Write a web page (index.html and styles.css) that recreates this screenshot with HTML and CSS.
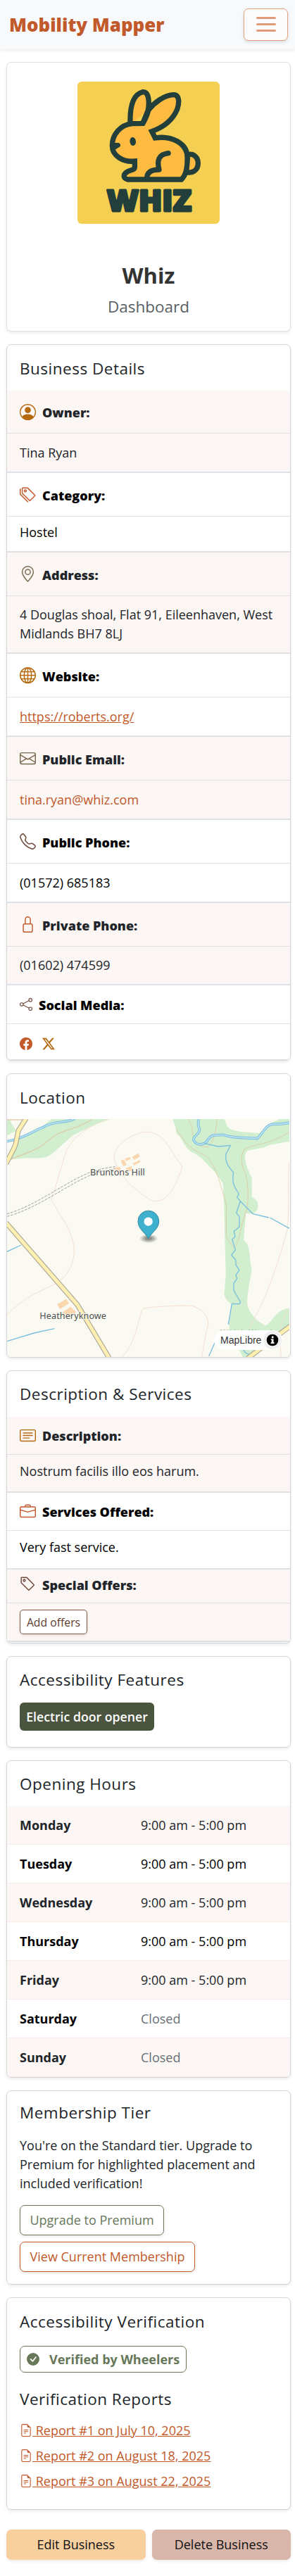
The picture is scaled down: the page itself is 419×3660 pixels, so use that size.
FILE: index.html
```html
<!DOCTYPE html>
<html lang="en">
<head>
<meta charset="utf-8">
<meta name="viewport" content="width=device-width, initial-scale=1">
<title>Mobility Mapper</title>
<link rel="stylesheet" href="styles.css">
</head>
<body>
<nav class="navbar">
  <a class="brand">Mobility Mapper</a>
  <button class="toggler" aria-label="Menu"><span></span><span></span><span></span></button>
</nav>
<main class="page">
  <section class="card profile">
    <svg class="logo" viewBox="30 48 606 606" role="img" aria-label="Whiz logo">
      <rect x="30" y="48" width="606" height="606" fill="#f5cf51"/>
      <g fill="#fdbb42" stroke="#223f3b" stroke-width="22" stroke-linejoin="round" stroke-linecap="round">
        <path d="M500 359C524 352 544 370 544 396C544 424 522 440 493 434Z"/>
        <path stroke-linejoin="miter" d="M255 227C253 165 263 104 307 92C337 88 336 140 331 170C355 140 400 104 440 104C466 104 464 140 455 166C438 207 402 240 347 260L361 288C430 277 498 310 498 370C499 410 495 445 473 465L245 465C222 462 224 440 246 430C262 423 275 424 274 412L274 387C225 392 178 365 178 320C178 275 212 232 263 227L308 226L331 170"/>
        <path fill="none" d="M326 457C328 430 350 423 378 423C368 385 375 358 417 353"/>
        <path fill="none" stroke-linecap="butt" d="M308 228C318 210 330 190 337 150"/>
      </g>
      <ellipse cx="266" cy="303" rx="13" ry="18" fill="#223f3b" transform="rotate(-8 266 303)"/>
      <path d="M180 308L206 309C216 314 216 326 204 329L194 336L180 333Z" fill="#223f3b"/>
      <text class="logo-text" x="155" y="600" textLength="361" lengthAdjust="spacingAndGlyphs">WHIZ</text>
    </svg>
    <h1>Whiz</h1>
    <p class="sub">Dashboard</p>
  </section>

  <section class="card details">
    <h2>Business Details</h2>
    <dl class="rows">
      <dt class="odd h61"><svg class="ic amber" viewBox="0 0 16 16"><path d="M11 6a3 3 0 1 1-6 0 3 3 0 0 1 6 0"/><path fill-rule="evenodd" d="M0 8a8 8 0 1 1 16 0A8 8 0 0 1 0 8m8-7a7 7 0 0 0-5.468 11.37C3.242 11.226 4.805 10 8 10s4.757 1.225 5.468 2.37A7 7 0 0 0 8 1"/></svg><span>Owner:</span></dt>
      <dd class="odd h56">Tina Ryan</dd>
      <dt class="h62"><svg class="ic rust" viewBox="0 0 16 16"><path d="M3 2v4.586l7 7L14.586 9l-7-7zM2 2a1 1 0 0 1 1-1h4.586a1 1 0 0 1 .707.293l7 7a1 1 0 0 1 0 1.414l-4.586 4.586a1 1 0 0 1-1.414 0l-7-7A1 1 0 0 1 2 6.586z"/><path d="M5.5 5a.5.5 0 1 1 0-1 .5.5 0 0 1 0 1m0 1a1.5 1.5 0 1 0 0-3 1.5 1.5 0 0 0 0 3M1 7.086a1 1 0 0 0 .293.707L8.75 15.25l-.043.043a1 1 0 0 1-1.414 0l-7-7A1 1 0 0 1 0 7.586V3a1 1 0 0 1 1-1z"/></svg><span>Category:</span></dt>
      <dd class="h51">Hostel</dd>
      <dt class="odd h62"><svg class="ic olive" viewBox="0 0 16 16"><path d="M12.166 8.94c-.524 1.062-1.234 2.12-1.96 3.07A32 32 0 0 1 8 14.58a32 32 0 0 1-2.206-2.57c-.726-.95-1.436-2.008-1.96-3.07C3.304 7.867 3 6.862 3 6a5 5 0 0 1 10 0c0 .862-.305 1.867-.834 2.94M8 16s6-5.686 6-10A6 6 0 0 0 2 6c0 4.314 6 10 6 10"/><path d="M8 8a2 2 0 1 1 0-4 2 2 0 0 1 0 4m0 1a3 3 0 1 0 0-6 3 3 0 0 0 0 6"/></svg><span>Address:</span></dt>
      <dd class="odd h82">4 Douglas shoal, Flat 91, Eileenhaven, West Midlands BH7 8LJ</dd>
      <dt class="h62"><svg class="ic amber line" viewBox="0 0 16 16"><circle cx="8" cy="8" r="7.5"/><ellipse cx="8" cy="8" rx="3.6" ry="7.5"/><path d="M8 .5v15M.5 8h15M1.7 4.5h12.6M1.7 11.5h12.6"/></svg><span>Website:</span></dt>
      <dd class="h56"><a class="link">https://roberts.org/</a></dd>
      <dt class="odd h62"><svg class="ic olive" viewBox="0 0 16 16"><path d="M0 4a2 2 0 0 1 2-2h12a2 2 0 0 1 2 2v8a2 2 0 0 1-2 2H2a2 2 0 0 1-2-2zm2-1a1 1 0 0 0-1 1v.217l7 4.2 7-4.2V4a1 1 0 0 0-1-1zm13 2.383-4.708 2.825L15 11.105zm-.034 6.876-5.64-3.471L8 9.583l-1.326-.795-5.64 3.47A1 1 0 0 0 2 13h12a1 1 0 0 0 .966-.741M1 11.105l4.708-2.897L1 5.383z"/></svg><span>Public Email:</span></dt>
      <dd class="odd h56"><a class="mail">tina.ryan@whiz.com</a></dd>
      <dt class="h62"><svg class="ic brown" viewBox="0 0 16 16"><path d="M3.654 1.328a.678.678 0 0 0-1.015-.063L1.605 2.3c-.483.484-.661 1.169-.45 1.77a17.6 17.6 0 0 0 4.168 6.608 17.6 17.6 0 0 0 6.608 4.168c.601.211 1.286.033 1.77-.45l1.034-1.034a.678.678 0 0 0-.063-1.015l-2.307-1.794a.68.68 0 0 0-.58-.122l-2.19.547a1.75 1.75 0 0 1-1.657-.459L5.482 8.062a1.75 1.75 0 0 1-.46-1.657l.548-2.19a.68.68 0 0 0-.122-.58zM1.884.511a1.745 1.745 0 0 1 2.612.163L6.29 2.98c.329.423.445.974.315 1.494l-.547 2.19a.68.68 0 0 0 .178.643l2.457 2.457a.68.68 0 0 0 .644.178l2.189-.547a1.75 1.75 0 0 1 1.494.315l2.306 1.794c.829.645.905 1.87.163 2.611l-1.034 1.034c-.74.74-1.846 1.065-2.877.702a18.6 18.6 0 0 1-7.01-4.42 18.6 18.6 0 0 1-4.42-7.009c-.362-1.03-.037-2.137.703-2.877z"/></svg><span>Public Phone:</span></dt>
      <dd class="h56">(01572) 685183</dd>
      <dt class="odd h62"><svg class="ic rust" viewBox="0 0 16 16"><path d="M8 1a2 2 0 0 1 2 2v4H6V3a2 2 0 0 1 2-2m3 6V3a3 3 0 0 0-6 0v4a2 2 0 0 0-2 2v5a2 2 0 0 0 2 2h6a2 2 0 0 0 2-2V9a2 2 0 0 0-2-2M5 8h6a1 1 0 0 1 1 1v5a1 1 0 0 1-1 1H5a1 1 0 0 1-1-1V9a1 1 0 0 1 1-1"/></svg><span>Private Phone:</span></dt>
      <dd class="odd h55">(01602) 474599</dd>
      <dt class="h55"><svg class="ic small brown line" viewBox="0 0 16 16"><circle cx="13.5" cy="2.5" r="2"/><circle cx="13.5" cy="13.5" r="2"/><circle cx="2.5" cy="8" r="2"/><path d="M4.3 7.1l7.4-3.7M4.3 8.9l7.4 3.7"/></svg><span>Social Media:</span></dt>
      <dd class="social">
        <svg class="ic small rust" viewBox="0 0 16 16"><path d="M16 8.049c0-4.446-3.582-8.05-8-8.05C3.58 0-.002 3.603-.002 8.05c0 4.017 2.926 7.347 6.75 7.951v-5.625h-2.03V8.05H6.75V6.275c0-2.017 1.195-3.131 3.022-3.131.876 0 1.791.157 1.791.157v1.98h-1.009c-.993 0-1.303.621-1.303 1.258v1.51h2.218l-.354 2.326H9.25V16c3.824-.604 6.75-3.934 6.75-7.951"/></svg>
        <svg class="ic small amber" viewBox="0 0 16 16"><path d="M12.6.75h2.454l-5.36 6.142L16 15.25h-4.937l-3.867-5.07-4.425 5.07H.316l5.733-6.57L0 .75h5.063l3.495 4.633L12.601.75Zm-.86 13.028h1.36L4.323 2.145H2.865z"/></svg>
      </dd>
    </dl>
  </section>

  <section class="card location">
    <h2>Location</h2>
    <div class="map">
      <svg class="map-art" viewBox="30 240 1203 1014">
        <rect x="30" y="240" width="1203" height="1014" fill="#fafaf2"/>
        <g fill="#d1efcf">
          <path d="M30 240L40 242L68 290L30 310Z"/>
          <path d="M95 310L180 270L220 240L470 240L420 258L360 285L310 310L270 345L225 385C200 405 185 408 150 406L95 407L30 413L60 370L75 325Z"/>
          <path d="M735 240L955 240L970 272C990 296 1050 295 1105 300L1145 262L1190 240H1233V335L1150 350C1110 372 1065 365 1052 378C1034 400 1050 445 1073 490V570C1090 585 1103 590 1099 615C1097 640 1070 650 1048 640L1038 755C1070 780 1060 820 1073 885C1062 940 1055 980 1053 1025C1060 1070 1100 1105 1133 1120C1165 1100 1175 1050 1233 1046V1130L1060 1254H1035C1020 1220 980 1180 975 1110L988 1030C960 1010 950 990 957 970L962 900L955 620L950 515L920 470C880 430 850 390 815 380C775 350 775 310 752 304C750 270 740 255 735 240Z"/>
        </g>
        <g fill="none" stroke="#f3dfd0" stroke-width="3">
          <path d="M465 240C370 270 310 320 285 370C260 440 245 510 218 583C260 660 315 720 316 805C312 880 270 920 240 940C150 985 100 1000 30 1075M520 1254C590 1180 595 1050 610 1048C680 1035 800 1034 820 1037C890 1060 895 1110 880 1140L860 1254M632 295C580 290 490 345 486 400C490 480 620 580 655 590C720 600 760 500 776 443L715 350C690 315 665 297 632 295ZM1233 420C1225 480 1235 600 1225 710C1200 800 1170 900 1140 970C1110 1050 1080 1090 1062 1135M1233 1046C1180 1110 1195 1200 1197 1254"/>
        </g>
        <g fill="none" stroke="#e0c4a0" stroke-width="4" opacity=".8">
          <path d="M40 413C110 385 160 370 190 345C270 270 300 300 390 243M30 243H95"/>
          <path d="M925 240C920 300 910 340 885 358C830 362 820 325 820 290C820 265 805 250 803 240M752 282C790 350 820 370 860 388C900 400 930 480 945 540C965 600 968 610 964 650V740C970 760 990 780 998 790C1020 770 1020 710 1047 640C1060 600 1060 520 1045 470C1025 430 1025 400 1040 370C1080 345 1150 350 1233 295" stroke-width="3"/>
        </g>
        <g fill="none" stroke="#a0a0a0" stroke-width="3" stroke-dasharray="11 5">
          <path d="M30 644C150 610 260 520 380 468C430 450 470 445 495 443M30 655C160 620 270 530 385 479C430 460 470 455 495 451"/>
        </g>
        <g fill="none" stroke-linejoin="round">
          <g stroke="#79bfdd" stroke-width="11"><path d="M30 335C110 320 140 290 180 277C230 245 280 260 320 238"/><path d="M845 240V270C865 300 820 310 825 330C840 360 875 345 882 335C900 300 920 310 950 307C1000 325 1050 318 1095 323C1120 305 1130 265 1160 262C1190 262 1210 260 1233 256"/></g>
          <g stroke="#bfe3f3" stroke-width="5"><path d="M30 335C110 320 140 290 180 277C230 245 280 260 320 238"/><path d="M845 240V270C865 300 820 310 825 330C840 360 875 345 882 335C900 300 920 310 950 307C1000 325 1050 318 1095 323C1120 305 1130 265 1160 262C1190 262 1210 260 1233 256"/></g>
          <path stroke="#79bfdd" stroke-width="4" d="M870 343L930 357L982 352L962 390C960 420 967 438 995 467C985 520 1005 535 1018 560L1010 573L1024 590L1007 640L1020 656V700L997 718L1002 742L989 752L1003 798L986 820L1004 840L1005 862L1020 884L1005 905L1010 920L996 940V970L1025 1020L1020 1028L988 1027L973 1115M1024 590L1078 644L1145 660M1150 660L1233 706M30 805L90 777M30 1187L145 1152L232 1133M890 1250L930 1160M1035 1220L1045 1235L1065 1245"/>
        </g>
        <g fill="none" stroke-linejoin="round">
          <g stroke="#aaa898" stroke-width="22"><path d="M112 236L78 290L67 345C60 370 45 390 26 430"/><path d="M26 682L330 1032L465 1258"/><path d="M1237 1122L1055 1260"/></g>
          <g stroke="#ffefb0" stroke-width="15"><path d="M112 236L78 290L67 345C60 370 45 390 26 430"/><path d="M26 682L330 1032L465 1258"/><path d="M1237 1122L1055 1260"/></g>
        </g>
        <g fill="#fbd7b0"><path d="M563 401L588 386L597 399L571 414ZM514 417L528 412L541 436L525 441ZM532 408L553 401L557 410L537 419ZM565 429L595 415L599 423L570 437ZM243 1030L282 1007L294 1025L256 1050ZM265 1064L300 1040L325 1062L300 1085ZM535 450L560 440L562 462H545ZM490 448L512 444L515 460H495Z"/></g>
        <g class="map-label"><text x="384" y="481" textLength="233">Bruntons Hill</text><text x="169" y="1093" textLength="284">Heatheryknowe</text></g>
        <text class="map-wood" x="940" y="1160" textLength="220">Whish Wood</text>
        <g fill="#000"><ellipse cx="633" cy="749" rx="36" ry="18" opacity=".12"/><ellipse cx="633" cy="749" rx="27" ry="13" opacity=".17"/><ellipse cx="633" cy="749" rx="17" ry="8" opacity=".2"/></g>
        <path d="M632 749C618 722 588 710 588 675A44 44 0 0 1 677 675C677 710 646 722 632 749Z" fill="#3fb1ce" stroke="#318aa1" stroke-width="3"/>
        <circle cx="632" cy="677" r="18.5" fill="#fff"/>
      </svg>
      <div class="attrib"><span>MapLibre</span><svg viewBox="0 0 24 24"><circle cx="12" cy="12" r="12" fill="#f0f0f0"/><circle cx="12" cy="12" r="7.7" fill="#000"/><path d="M11 7h2.4v2.4H11zM10 10.5h3.4V15h1v1.6H9.8V15h1v-3H10z" fill="#fff"/></svg></div>
    </div>
  </section>

  <section class="card services">
    <h2>Description &amp; Services</h2>
    <dl class="rows">
      <dt class="odd h54"><svg class="ic amber" viewBox="0 0 16 16"><path d="M14.5 3a.5.5 0 0 1 .5.5v9a.5.5 0 0 1-.5.5h-13a.5.5 0 0 1-.5-.5v-9a.5.5 0 0 1 .5-.5zm-13-1A1.5 1.5 0 0 0 0 3.5v9A1.5 1.5 0 0 0 1.5 14h13a1.5 1.5 0 0 0 1.5-1.5v-9A1.5 1.5 0 0 0 14.5 2z"/><path d="M3 5.5a.5.5 0 0 1 .5-.5h9a.5.5 0 0 1 0 1h-9a.5.5 0 0 1-.5-.5M3 8a.5.5 0 0 1 .5-.5h9a.5.5 0 0 1 0 1h-9A.5.5 0 0 1 3 8m0 2.5a.5.5 0 0 1 .5-.5h6a.5.5 0 0 1 0 1h-6a.5.5 0 0 1-.5-.5"/></svg><span>Description:</span></dt>
      <dd class="odd h54">Nostrum facilis illo eos harum.</dd>
      <dt class="h54"><svg class="ic rust" viewBox="0 0 16 16"><path d="M6.5 1A1.5 1.5 0 0 0 5 2.5V3H1.5A1.5 1.5 0 0 0 0 4.5v8A1.5 1.5 0 0 0 1.5 14h13a1.5 1.5 0 0 0 1.5-1.5v-8A1.5 1.5 0 0 0 14.5 3H11v-.5A1.5 1.5 0 0 0 9.5 1zm0 1h3a.5.5 0 0 1 .5.5V3H6v-.5a.5.5 0 0 1 .5-.5m1.886 6.914L15 7.151V12.5a.5.5 0 0 1-.5.5h-13a.5.5 0 0 1-.5-.5V7.15l6.614 1.764a1.5 1.5 0 0 0 .772 0M1.5 4h13a.5.5 0 0 1 .5.5v1.616L8.129 7.948a.5.5 0 0 1-.258 0L1 6.116V4.5a.5.5 0 0 1 .5-.5"/></svg><span>Services Offered:</span></dt>
      <dd class="h55">Very fast service.</dd>
      <dt class="odd h48"><svg class="ic brown" viewBox="0 0 16 16"><path d="M6 4.5a1.5 1.5 0 1 1-3 0 1.5 1.5 0 0 1 3 0m-1 0a.5.5 0 1 0-1 0 .5.5 0 0 0 1 0"/><path d="M2 1h4.586a1 1 0 0 1 .707.293l7 7a1 1 0 0 1 0 1.414l-4.586 4.586a1 1 0 0 1-1.414 0l-7-7A1 1 0 0 1 1 6.586V2a1 1 0 0 1 1-1m0 5.586 7 7L13.586 9l-7-7H2z"/></svg><span>Special Offers:</span></dt>
      <dd class="odd offers"><button class="btn-sm">Add offers</button></dd>
    </dl>
  </section>

  <section class="card features">
    <h2>Accessibility Features</h2>
    <span class="feature">Electric door opener</span>
  </section>

  <section class="card hours">
    <h2>Opening Hours</h2>
    <div class="day odd"><b>Monday</b><span>9:00 am - 5:00 pm</span></div>
    <div class="day"><b>Tuesday</b><span>9:00 am - 5:00 pm</span></div>
    <div class="day odd"><b>Wednesday</b><span>9:00 am - 5:00 pm</span></div>
    <div class="day"><b>Thursday</b><span>9:00 am - 5:00 pm</span></div>
    <div class="day odd"><b>Friday</b><span>9:00 am - 5:00 pm</span></div>
    <div class="day"><b>Saturday</b><span class="closed">Closed</span></div>
    <div class="day odd"><b>Sunday</b><span class="closed">Closed</span></div>
  </section>

  <section class="card member">
    <h2>Membership Tier</h2>
    <p>You're on the Standard tier. Upgrade to Premium for highlighted placement and included verification!</p>
    <button class="btn green">Upgrade to Premium</button>
    <button class="btn orange">View Current Membership</button>
  </section>

  <section class="card verify">
    <h2>Accessibility Verification</h2>
    <div class="verified"><svg class="ic small" viewBox="0 0 16 16"><path d="M16 8A8 8 0 1 1 0 8a8 8 0 0 1 16 0m-3.97-3.03a.75.75 0 0 0-1.08.022L7.477 9.417 5.384 7.323a.75.75 0 0 0-1.06 1.06L6.97 11.03a.75.75 0 0 0 1.079-.02l3.992-4.99a.75.75 0 0 0-.01-1.05z"/></svg><span>Verified by Wheelers</span></div>
    <h2 class="reports-title">Verification Reports</h2>
    <ul class="reports">
      <li><svg class="ic small rust" viewBox="0 0 16 16"><path d="M5.5 7a.5.5 0 0 0 0 1h5a.5.5 0 0 0 0-1zM5 9.5a.5.5 0 0 1 .5-.5h5a.5.5 0 0 1 0 1h-5a.5.5 0 0 1-.5-.5m0 2a.5.5 0 0 1 .5-.5h2a.5.5 0 0 1 0 1h-2a.5.5 0 0 1-.5-.5"/><path d="M9.5 0H4a2 2 0 0 0-2 2v12a2 2 0 0 0 2 2h8a2 2 0 0 0 2-2V4.5zm0 1v2A1.5 1.5 0 0 0 11 4.5h2V14a1 1 0 0 1-1 1H4a1 1 0 0 1-1-1V2a1 1 0 0 1 1-1z"/></svg><a class="link">&nbsp;Report #1 on July 10, 2025</a></li>
      <li><svg class="ic small rust" viewBox="0 0 16 16"><path d="M5.5 7a.5.5 0 0 0 0 1h5a.5.5 0 0 0 0-1zM5 9.5a.5.5 0 0 1 .5-.5h5a.5.5 0 0 1 0 1h-5a.5.5 0 0 1-.5-.5m0 2a.5.5 0 0 1 .5-.5h2a.5.5 0 0 1 0 1h-2a.5.5 0 0 1-.5-.5"/><path d="M9.5 0H4a2 2 0 0 0-2 2v12a2 2 0 0 0 2 2h8a2 2 0 0 0 2-2V4.5zm0 1v2A1.5 1.5 0 0 0 11 4.5h2V14a1 1 0 0 1-1 1H4a1 1 0 0 1-1-1V2a1 1 0 0 1 1-1z"/></svg><a class="link">&nbsp;Report #2 on August 18, 2025</a></li>
      <li><svg class="ic small rust" viewBox="0 0 16 16"><path d="M5.5 7a.5.5 0 0 0 0 1h5a.5.5 0 0 0 0-1zM5 9.5a.5.5 0 0 1 .5-.5h5a.5.5 0 0 1 0 1h-5a.5.5 0 0 1-.5-.5m0 2a.5.5 0 0 1 .5-.5h2a.5.5 0 0 1 0 1h-2a.5.5 0 0 1-.5-.5"/><path d="M9.5 0H4a2 2 0 0 0-2 2v12a2 2 0 0 0 2 2h8a2 2 0 0 0 2-2V4.5zm0 1v2A1.5 1.5 0 0 0 11 4.5h2V14a1 1 0 0 1-1 1H4a1 1 0 0 1-1-1V2a1 1 0 0 1 1-1z"/></svg><a class="link">&nbsp;Report #3 on August 22, 2025</a></li>
    </ul>
  </section>

  <div class="actions">
    <button class="edit">Edit Business</button>
    <button class="delete">Delete Business</button>
  </div>
</main>
</body>
</html>
```

FILE: styles.css
```css
* { box-sizing: border-box; }
body {
  margin: 0;
  background: #fff;
  color: #212529;
  font: 400 18px/27px "Open Sans", "Noto Sans", sans-serif;
}
h1, h2, p, dl, dd, ul { margin: 0; padding: 0; }
button { font: inherit; background: #fff; cursor: pointer; white-space: nowrap; }

.navbar {
  display: flex;
  align-items: center;
  justify-content: space-between;
  height: 70px;
  padding: 0 10px 0 13px;
  background: #f8f9fb;
  box-shadow: 0 2px 4px rgba(0, 0, 0, .08);
}
.brand { font-weight: 800; font-size: 25.9px; line-height: 38px; color: #c1592a; }
.toggler {
  display: flex;
  flex-direction: column;
  align-items: center;
  justify-content: center;
  gap: 5.6px;
  width: 63px;
  height: 46px;
  padding: 0 0 1px;
  background: #fcfcfd;
  border: 1px solid #e5a080;
  border-radius: 7px;
  box-shadow: 0 2px 4px rgba(0, 0, 0, .12);
}
.toggler span { width: 28px; height: 3.5px; border-radius: 2px; background: #e29a79; }

.page { display: flex; flex-direction: column; gap: 18px; padding: 18px 6px 23px 9px; }
.card {
  background: #fff;
  border: 1px solid #d3d5d8;
  border-radius: 7px;
  box-shadow: 0 2px 4px rgba(0, 0, 0, .085);
  overflow: hidden;
}
h2 { font-weight: 400; font-size: 22.5px; line-height: 27px; letter-spacing: .5px; padding: 20px 18px 18px; }

.profile { height: 383px; display: flex; flex-direction: column; align-items: center; padding-top: 27px; border-color: #dee1e6; }
.logo { display: block; width: 202px; height: 202px; border-radius: 6px; }
.logo-text { font: 800 126px "Open Sans", sans-serif; fill: #223f3b; stroke: #223f3b; stroke-width: 9; stroke-linejoin: round; }
h1 { margin-top: 54px; font-size: 31px; line-height: 38px; font-weight: 700; color: #333; }
.sub { margin-top: 9px; font-size: 22.5px; line-height: 34px; color: #595f64; }

.details { height: 1018px; }
.rows dt, .rows dd { display: flex; align-items: center; padding: 0 18px; border-bottom: 1px solid #dee2e6; color: #000; }
.rows dd { border-bottom-width: 2px; }
.rows dt { font-weight: 800; gap: 9px; }
.rows dt span { padding-top: 3px; }
.rows .odd { background: #fcf6f4; color: #212529; }
.h48 { height: 48px; }
.h51 { height: 51px; }
.h54 { height: 54px; }
.h55 { height: 55px; }
.h56 { height: 56px; }
.h61 { height: 61px; }
.h62 { height: 62px; }
.h82 { height: 82px; }
.rows dd.h51 { padding-bottom: 5px; }
.rows dd.h82 { padding-bottom: 1px; }
.rows dd.social { gap: 14px; padding: 6px 18px 0; height: 52px; }
.ic { flex: none; display: block; width: 23px; height: 23px; fill: currentColor; }
.small { width: 18px; height: 18px; }
.line { fill: none; stroke: currentColor; }
.amber { color: #b5690f; }
.rust { color: #c1592a; }
.olive { color: #7a6a50; }
.brown { color: #6f4a3c; }
.link { color: #c1592a; text-decoration: underline; }
.mail { color: #c1592a; }

.location { height: 404px; }
.location h2 { padding-bottom: 17px; }
.map { position: relative; width: 401px; height: 338px; }
.map-art { display: block; width: 401px; height: 338px; }
.map-label { font: 400 38px "Noto Sans", sans-serif; fill: #4d4d4d; stroke: #fafaf2; stroke-width: 5; paint-order: stroke; }
.map-wood { font: 400 34px "Noto Sans", sans-serif; fill: #7aa57a; }
.attrib {
  position: absolute;
  right: 10px;
  bottom: 10px;
  display: flex;
  align-items: center;
  justify-content: space-between;
  width: 97px;
  height: 28px;
  padding: 0 1px 0 9px;
  background: #fff;
  border-radius: 14px;
  font: 14px/20px "Liberation Sans", Arial, sans-serif;
  color: #333;
}
.attrib svg { width: 26px; height: 26px; }

.services { height: 388px; }
.services h2 { padding: 19px 18px; }
.services dt .ic { margin-top: -1px; }
.services dt span { padding-top: 2px; }
.services dd { padding-bottom: 6px; }
.rows dd.h54, .rows .services dd { padding-bottom: 6px; }
.services .rows .h48 { padding-bottom: 5px; }
.services .rows .h55 { padding-bottom: 6px; }
.services .rows .offers { height: 55px; padding-bottom: 0; }
.btn-sm {
  height: 35px;
  width: 96px;
  padding: 0;
  background: #fff;
  border: 1px solid #835243;
  border-radius: 5px;
  box-shadow: 0 2px 4px rgba(0, 0, 0, .09);
  font-size: 15.75px;
  line-height: 24px;
  color: #5c3c31;
}

.features { height: 130px; }
.features h2 { padding: 19px 18px; }
.feature {
  display: block;
  width: 191px;
  height: 40px;
  margin-left: 18px;
  border-radius: 6px;
  background: #4b543e;
  color: #fff;
  font-weight: 600;
  font-size: 17.7px;
  line-height: 40px;
  text-align: center;
}

.hours { height: 451px; }
.hours h2 { padding: 19px 18px 18px; }
.day { display: grid; grid-template-columns: 172px 1fr; align-items: center; height: 55px; padding: 0 18px; border-bottom: 1px solid #fbece7; color: #000; }
.day.odd { background: #fcf6f4; color: #212529; }
.day .closed { color: #6a7075; }

.member { height: 276px; display: flex; flex-direction: column; align-items: flex-start; padding: 0 18px; }
.member h2 { padding: 17px 0 20px; }
.member p { width: 350px; margin-bottom: 17px; }
.btn { height: 43px; padding: 0; border: 1px solid; border-radius: 7px; box-shadow: 0 2px 4px rgba(0, 0, 0, .09); margin-bottom: 9px; }
.green { width: 205px; color: #67775a; }
.orange { width: 249px; color: #c1592a; }

.verify { height: 302px; padding: 0 18px; }
.verify h2 { padding: 20px 0 21px; }
.verified {
  display: flex;
  align-items: center;
  gap: 14px;
  width: 237px;
  height: 38px;
  padding-left: 9px;
  border: 1px solid #67775a;
  border-radius: 7px;
  color: #67775a;
  font-weight: 700;
}
.verify .reports-title { padding: 24px 0 18px; }
.reports { list-style: none; display: flex; flex-direction: column; gap: 9px; }
.reports li { display: flex; align-items: center; height: 27px; }
.reports .ic { margin-top: -1px; }

.actions { display: grid; grid-template-columns: 1fr 1fr; gap: 9px; padding-top: 10px; }
.actions button { height: 43px; padding: 0; border: 0; border-radius: 7px; color: #111; box-shadow: 0 2px 4px rgba(0, 0, 0, .08); }
.actions .edit { background: #f8cf9f; }
.actions .delete { background: #d8b6aa; }
```
